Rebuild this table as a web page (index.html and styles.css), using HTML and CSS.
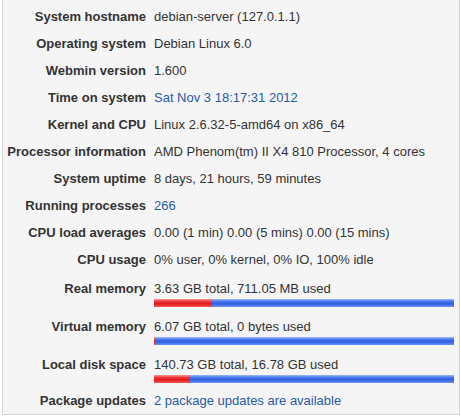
FILE: index.html
```html
<!DOCTYPE html>
<html>
<head>
<meta charset="utf-8">
<link rel="stylesheet" href="styles.css">
</head>
<body>
<div class="panel">
  <div class="row"><div class="label">System hostname</div><div class="value">debian-server (127.0.1.1)</div></div>
  <div class="row"><div class="label">Operating system</div><div class="value">Debian Linux 6.0</div></div>
  <div class="row"><div class="label">Webmin version</div><div class="value">1.600</div></div>
  <div class="row"><div class="label">Time on system</div><div class="value"><a class="link" href="#">Sat Nov 3 18:17:31 2012</a></div></div>
  <div class="row"><div class="label">Kernel and CPU</div><div class="value">Linux 2.6.32-5-amd64 on x86_64</div></div>
  <div class="row"><div class="label">Processor information</div><div class="value">AMD Phenom(tm) II X4 810 Processor, 4 cores</div></div>
  <div class="row"><div class="label">System uptime</div><div class="value">8 days, 21 hours, 59 minutes</div></div>
  <div class="row"><div class="label">Running processes</div><div class="value"><a class="link" href="#">266</a></div></div>
  <div class="row"><div class="label">CPU load averages</div><div class="value">0.00 (1 min) 0.00 (5 mins) 0.00 (15 mins)</div></div>
  <div class="row"><div class="label">CPU usage</div><div class="value">0% user, 0% kernel, 0% IO, 100% idle</div></div>
  <div class="row mem"><div class="label">Real memory</div><div class="value">3.63 GB total, 711.05 MB used<div class="bar"><div class="used" style="width:19.3%"></div><div class="free"></div></div></div></div>
  <div class="row mem"><div class="label">Virtual memory</div><div class="value">6.07 GB total, 0 bytes used<div class="bar"><div class="used" style="width:0.4%"></div><div class="free"></div></div></div></div>
  <div class="row mem"><div class="label">Local disk space</div><div class="value">140.73 GB total, 16.78 GB used<div class="bar"><div class="used" style="width:12%"></div><div class="free"></div></div></div></div>
  <div class="row"><div class="label">Package updates</div><div class="value"><a class="link" href="#">2 package updates are available</a></div></div>
</div>
</body>
</html>
```
FILE: styles.css
```css
html, body {
  margin: 0;
  padding: 0;
  background: #ffffff;
}
body {
  font-family: "Liberation Sans", Arial, sans-serif;
  font-size: 13px;
  color: #333333;
}
.panel {
  margin-left: 2px;
  width: 456px;
  height: 411px;
  padding-top: 3px;
  background: #f5f5f5;
  border: 1px solid #d4d4d4;
  border-top: none;
}
.row {
  display: grid;
  grid-template-columns: 143px 1fr;
  column-gap: 8px;
  padding: 5px 0;
  line-height: 17px;
}
.row.mem {
  padding: 7px 0 4px;
}
.label {
  text-align: right;
  font-weight: bold;
  color: #333333;
  white-space: nowrap;
}
.value {
  white-space: nowrap;
  padding-right: 4px;
}
.link {
  color: #2a5aa8;
  text-decoration: none;
}
.bar {
  display: flex;
  width: 300px;
  height: 8px;
  margin-top: 2px;
}
.used {
  height: 100%;
  background: linear-gradient(#ff9a9a 0%, #f03a3a 30%, #e01818 60%, #f45a5a 100%);
}
.free {
  flex: 1;
  height: 100%;
  background: linear-gradient(#9fb8ff 0%, #4a78ec 30%, #2e5fe0 60%, #6f92f4 100%);
}
```
